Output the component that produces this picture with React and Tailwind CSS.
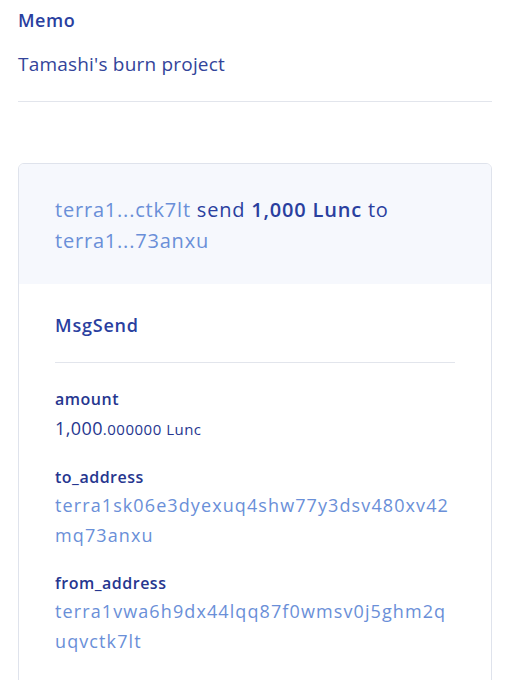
export default function App() {
  return (
    <div className="min-h-[680px] bg-white px-[18px] font-['Open_Sans',sans-serif]">
      <div className="pt-[6px]">
        <div className="text-[18px] leading-[28px] font-semibold tracking-[0.5px] text-[#2a3f9f]">Memo</div>
        <div className="mt-[16px] text-[19px] leading-[28px] tracking-[0.2px] text-[#33449a]">Tamashi's burn project</div>
      </div>
      <div className="mt-[23px] h-px bg-[#e2e5ec]" />
      <div className="mt-[61px] rounded-[6px] border border-[#dfe3ec] overflow-hidden">
        <div className="bg-[#f6f8fd] px-[36px] pt-[30px] pb-[28px] text-[20px] leading-[31px] tracking-[0.8px] text-[#2a3f9f]">
          <span className="text-[#6a8fd8]">terra1...ctk7lt</span> send <span className="font-semibold">1,000 Lunc</span> to{" "}
          <span className="text-[#6a8fd8]">terra1...73anxu</span>
        </div>
        <div className="px-[36px] pt-[27px] pb-[40px]">
          <div className="text-[18px] leading-[28px] font-semibold tracking-[0.8px] text-[#2a3f9f]">MsgSend</div>
          <div className="mt-[23px] h-px bg-[#e2e5ec]" />
          <div className="mt-[23px] text-[16px] leading-[26px] font-semibold tracking-[0.5px] text-[#26368f]">amount</div>
          <div className="mt-[2px] text-[18px] leading-[28px] tracking-[0.4px] text-[#26368f]">
            1,000<span className="text-[15px] tracking-[0.5px]">.000000 Lunc</span>
          </div>
          <div className="mt-[21px] text-[16px] leading-[26px] font-semibold tracking-[0.5px] text-[#26368f]">to_address</div>
          <div className="text-[18px] leading-[30px] tracking-[1.1px] text-[#6a8fd8] break-all">terra1sk06e3dyexuq4shw77y3dsv480xv42mq73anxu</div>
          <div className="mt-[20px] text-[16px] leading-[26px] font-semibold tracking-[0.5px] text-[#26368f]">from_address</div>
          <div className="text-[18px] leading-[30px] tracking-[1.1px] text-[#6a8fd8] break-all">terra1vwa6h9dx44lqq87f0wmsv0j5ghm2quqvctk7lt</div>
        </div>
      </div>
    </div>
  );
}
